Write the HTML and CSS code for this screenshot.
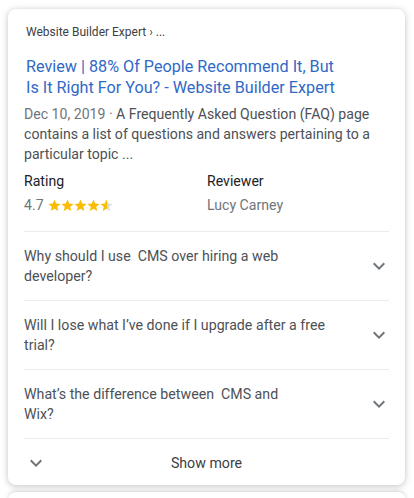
FILE: index.html
```html
<!DOCTYPE html>
<html>
<head>
<meta charset="utf-8">
<link rel="stylesheet" href="styles.css">
</head>
<body>
<div class="card">
  <div class="crumb">Website Builder Expert › ...</div>
  <a class="title">Review | 88% Of People Recommend It, But Is It Right For You? - Website Builder Expert</a>
  <div class="snippet"><span class="date">Dec 10, 2019 ·</span> A Frequently Asked Question (FAQ) page contains a list of questions and answers pertaining to a particular topic ...</div>
  <div class="meta">
    <div class="col">
      <div class="label">Rating</div>
      <div class="value">4.7 <span class="stars"><svg width="66" height="13" viewBox="0 0 66 13">
        <defs>
          <linearGradient id="half"><stop offset="55%" stop-color="#fbbc04"/><stop offset="55%" stop-color="#dadce0"/></linearGradient>
          <path id="s" d="M6.5 0.5 L8.2 4.6 L12.6 4.9 L9.2 7.8 L10.3 12.1 L6.5 9.8 L2.7 12.1 L3.8 7.8 L0.4 4.9 L4.8 4.6 Z"/>
        </defs>
        <use href="#s" x="0" fill="#fbbc04"/>
        <use href="#s" x="13" fill="#fbbc04"/>
        <use href="#s" x="26" fill="#fbbc04"/>
        <use href="#s" x="39" fill="#fbbc04"/>
        <use href="#s" x="52" fill="url(#half)"/>
      </svg></span></div>
    </div>
    <div class="col">
      <div class="label">Reviewer</div>
      <div class="value">Lucy Carney</div>
    </div>
  </div>
  <div class="faq">
    <div class="q"><span>Why should I use &nbsp;CMS over hiring a web developer?</span><svg class="chev" width="24" height="24" viewBox="0 0 24 24"><path d="M7.41 8.59L12 13.17l4.59-4.58L18 10l-6 6-6-6 1.41-1.41z" fill="#70757a"/></svg></div>
    <div class="q"><span>Will I lose what I’ve done if I upgrade after a free trial?</span><svg class="chev" width="24" height="24" viewBox="0 0 24 24"><path d="M7.41 8.59L12 13.17l4.59-4.58L18 10l-6 6-6-6 1.41-1.41z" fill="#70757a"/></svg></div>
    <div class="q"><span>What’s the difference between &nbsp;CMS and<br>Wix?</span><svg class="chev" width="24" height="24" viewBox="0 0 24 24"><path d="M7.41 8.59L12 13.17l4.59-4.58L18 10l-6 6-6-6 1.41-1.41z" fill="#70757a"/></svg></div>
  </div>
  <div class="more"><svg class="chev" width="24" height="24" viewBox="0 0 24 24"><path d="M7.41 8.59L12 13.17l4.59-4.58L18 10l-6 6-6-6 1.41-1.41z" fill="#70757a"/></svg><span>Show more</span></div>
</div>
<div class="next"></div>
</body>
</html>
```

FILE: styles.css
```css
html, body { margin: 0; padding: 0; background: #fff; }
body { font-family: Roboto, "Noto Sans", Arial, sans-serif; color: #3c4043; }
.card {
  margin: 9px 9px 0 8px;
  background: #fff;
  border-radius: 8px;
  box-shadow: 0 1px 6px rgba(32,33,36,0.28);
  padding: 14px 16px 0 16px;
  height: 476px;
  box-sizing: border-box;
}
.crumb { font-size: 12px; line-height: 18px; color: #3c4043; padding-left: 2px; }
.title { display: block; font-size: 16.2px; line-height: 21px; color: #3069c8; margin-top: 15px; padding-left: 2px; max-width: 316px; }
.snippet { margin-top: 6px; font-size: 14.1px; line-height: 20px; color: #4d5156; }
.date { color: #70757a; }
.meta { display: flex; margin-top: 7px; }
.col { flex: 0 0 183px; }
.label { font-size: 14.1px; line-height: 20px; color: #202124; }
.value { font-size: 14.1px; line-height: 20px; color: #70757a; margin-top: 4px; display: flex; align-items: center; gap: 4px; }
.stars { display: inline-flex; }
.faq { margin-top: 16px; border-top: 1px solid #ebebeb; }
.q { display: flex; align-items: center; justify-content: space-between; height: 68px; border-bottom: 1px solid #ebebeb; font-size: 14.2px; line-height: 20.5px; color: #4d5156; }
.q span { max-width: 310px; }
.q .chev { margin-right: -2px; }
.more { position: relative; display: flex; justify-content: center; align-items: center; height: 47px; font-size: 14.2px; color: #3c4043; }
.more .chev { position: absolute; left: 0; top: 12px; }
.next { margin: 6px 8px 0 8px; height: 20px; border-top: 1px solid #e0e0e0; border-radius: 8px 8px 0 0; box-shadow: 0 -1px 4px rgba(32,33,36,0.12); }
```
